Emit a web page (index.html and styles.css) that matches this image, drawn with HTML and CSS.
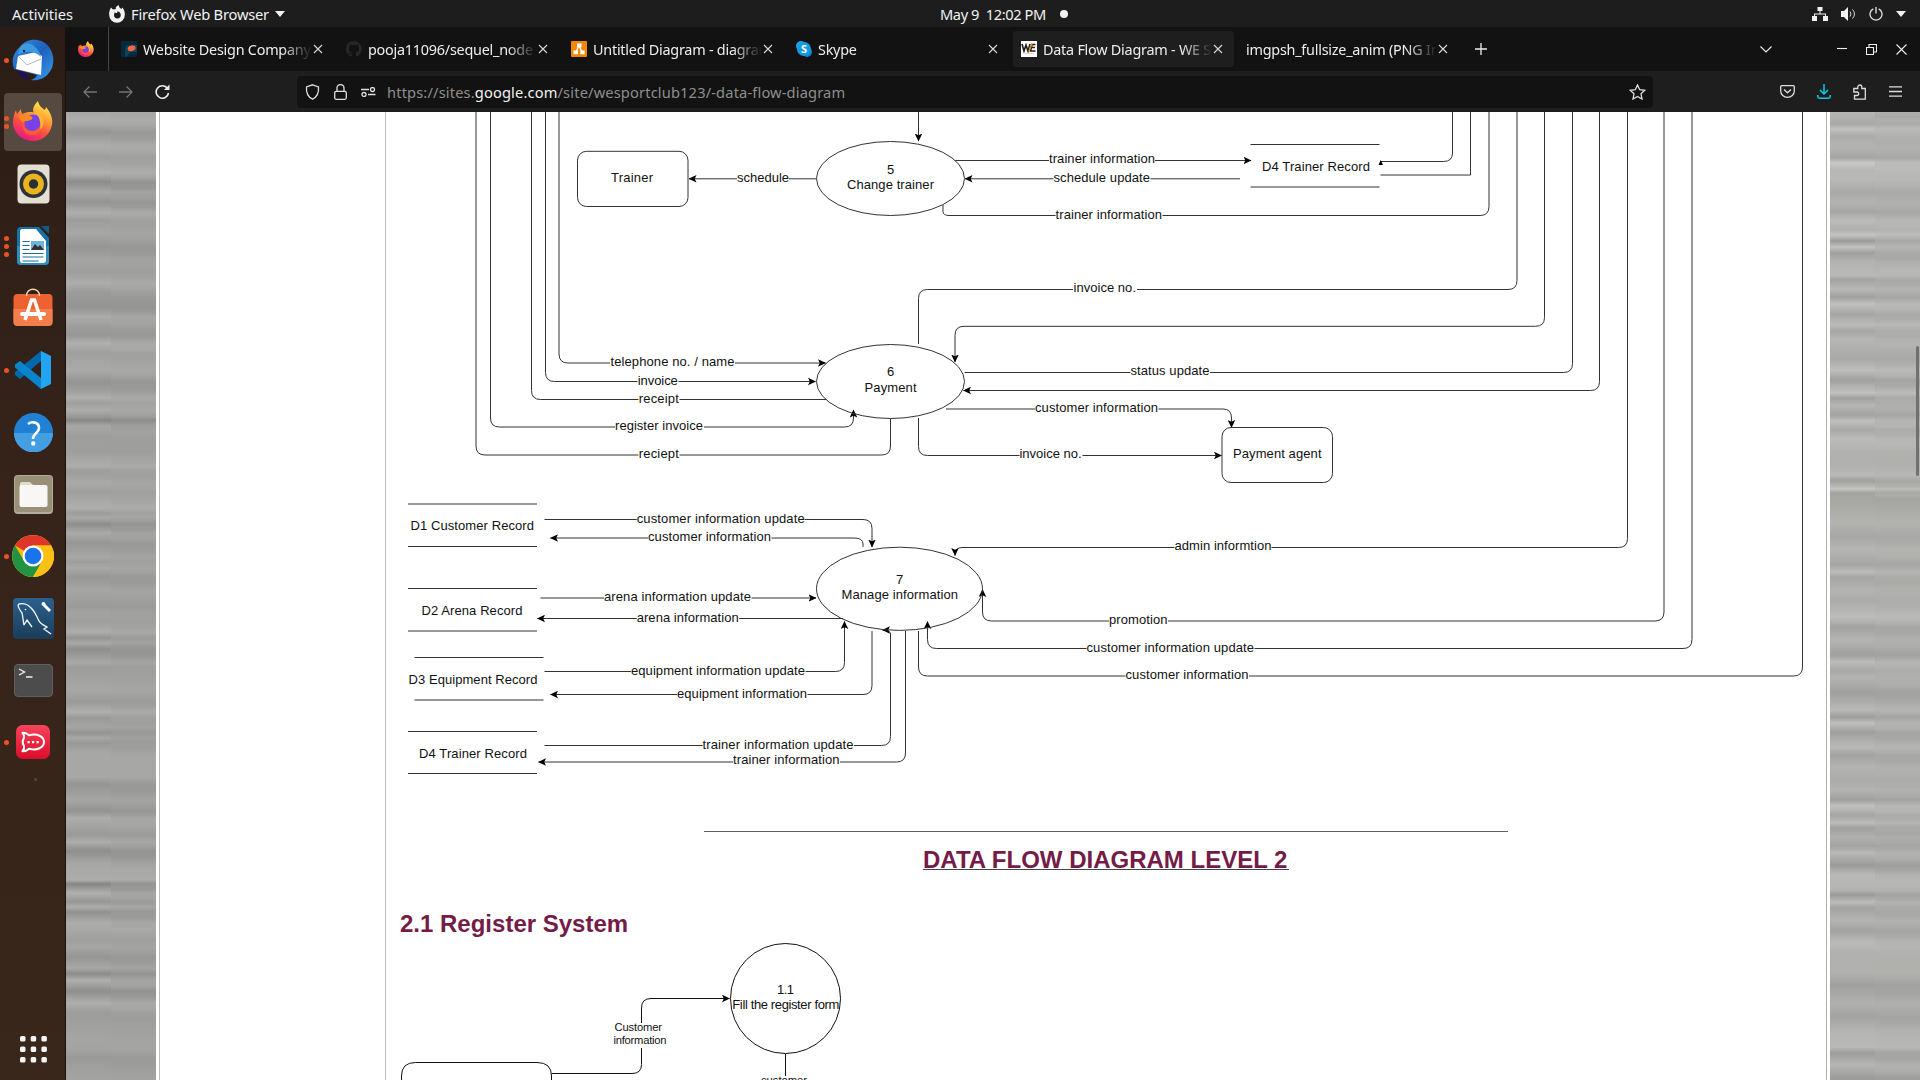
FILE: index.html
```html
<!DOCTYPE html>
<html lang="en">
<head>
<meta charset="utf-8">
<title>Data Flow Diagram</title>
<link rel="stylesheet" href="styles.css">
</head>
<body>
<svg class="defs" width="0" height="0">
  <defs>
    <linearGradient id="foxBody" x1="0.8" y1="0" x2="0.3" y2="1"><stop offset="0" stop-color="#fff44f"/><stop offset=".35" stop-color="#ffa436"/><stop offset=".65" stop-color="#ff4f3f"/><stop offset="1" stop-color="#e31587"/></linearGradient>
    <linearGradient id="birdBody" x1="0" y1="0" x2="1" y2="1"><stop offset="0" stop-color="#2f8fdc"/><stop offset=".5" stop-color="#1f5fc0"/><stop offset="1" stop-color="#3aa0e8"/></linearGradient>
    <linearGradient id="sqlBg" x1="0" y1="0" x2="0" y2="1"><stop offset="0" stop-color="#2b608f"/><stop offset="1" stop-color="#1b3d58"/></linearGradient>
    <linearGradient id="rocketBg" x1="0" y1="0" x2="0" y2="1"><stop offset="0" stop-color="#f5455c"/><stop offset="1" stop-color="#db0c29"/></linearGradient>
    <marker id="arrow" viewBox="0 0 8 8" refX="7.5" refY="4" markerWidth="8" markerHeight="8" markerUnits="userSpaceOnUse" orient="auto"><path d="M0 .2 8 4 0 7.8 1.8 4z"/></marker>
    <symbol id="fox" viewBox="0 0 40 40">
      <path d="M3 9c.4 2 .8 3 1 4l4-5c0 2 .6 4 1.500 5 4-2 8-2.500 11-1.500C19 7 22 3 25 0c1 5 4 7 7 9l1-3c5 6 7 12 6 18-2 10-10 16-19 16C8 40 0 31 0 21c0-4 1-8 3-12z" fill="url(#foxBody)"/>
      <circle cx="20" cy="22" r="8.500" fill="#7542e5"/>
      <path d="M5 15c5-2 10-2 14 1 2 2-2 4-7 4-1 0-1 1-1 2-3-2-5-4-6-7z" fill="#ff8a1f"/>
      <path d="M10 20c0 8 7 12 13 9 3-2 4-4 5-6 1 6-3 11-9 11-7 0-11-7-9-14z" fill="#ff5a3c"/>
      <path d="M23 11c6 2 9 7 7 13-1 3-2 4-3 5 1-6 0-12-4-18z" fill="#ffb52e"/>
    </symbol>
  </defs>
</svg>

<header class="topbar">
  <div class="top-left">
    <span class="t-act">Activities</span>
    <svg class="t-fox" width="16" height="18" viewBox="0 0 16 18"><path d="M.8 5 2 2.500 4 4.500 7 4C6 2 8 1 10 0c-.5 2 1 3 2.500 4l1-1.500C15.500 5 16 8 15.800 10A7.800 7.800 0 0 1 .2 10C.1 8 .2 6.500.8 5zM5 6c2 1 0 2 0 4a3.400 3.400 0 0 0 6.800 0C11.800 8 10 6 8 6.500 9 7.500 8 8 7 8c-1 0-1-1-2-2z" fill="#f2f2f2" fill-rule="evenodd"/></svg>
    <span class="t-app">Firefox Web Browser</span>
    <svg width="10" height="6" viewBox="0 0 10 6"><path d="M0 0h10L5 6z" fill="#f2f2f2"/></svg>
  </div>
  <div class="top-mid"><span class="t-date">May 9&nbsp; 12:02 PM</span><i class="dot"></i></div>
  <div class="top-right">
    <svg width="16" height="14" viewBox="0 0 16 14" fill="#f2f2f2"><path d="M5.500 0h5v4H8.500v2.500H14V9h2v5h-5V9h2V7.500H3V9h2v5H0V9h2V6.500h5.500V4h-2z"/></svg>
    <svg width="15" height="14" viewBox="0 0 15 14"><path d="M0 4h3l4-4v14l-4-4H0z" fill="#f2f2f2"/><path d="M9 4.500q2 2.500 0 5M11.500 2.500q4 4.500 0 9" fill="none" stroke="#ddd"/></svg>
    <svg width="14" height="14" viewBox="0 0 14 14" fill="none" stroke="#e6e6e6" stroke-width="1.300"><path d="M4.300 1.800a6 6 0 1 0 5.400 0M7 0v6.500"/></svg>
    <svg width="10" height="6" viewBox="0 0 10 6"><path d="M0 0h10L5 6z" fill="#f2f2f2"/></svg>
  </div>
</header>

<div class="desktop">
  <nav class="dock">
    <div class="app"><span class="run"><i></i></span>
      <svg width="42" height="42" viewBox="0 0 42 42"><path d="M8 8C15-2 30-1 37 8c6 8 6 20-1 27-4 5-11 7-17 6 3-1 5-3 6-5L2 30C-1 22 1 14 8 8z" fill="url(#birdBody)"/><path d="M5 32c2 5 6 8 13 9-3-3-4-5-4-7z" fill="#20105a"/><path d="M6 17 24 13l6 4-1 19-25-6z" fill="#fff"/><path d="m6 17 9 9 14-6" fill="none" stroke="#b5b8c4"/><path d="M8 8c5-5 12-4 15 0 3 3 5 5 6 10-5-5-13-7-21-3-3 1-1-4 0-7z" fill="#3d9be3"/><circle cx="12" cy="12" r="1.200" fill="#123"/></svg></div>
    <div class="app on"><span class="run"><i></i><i></i></span><svg width="40" height="40"><use href="#fox"/></svg></div>
    <div class="app"><svg width="33" height="40" viewBox="0 0 33 40"><rect x=".5" y=".5" width="32" height="39" rx="4" fill="#e3dfd3"/><circle cx="16.500" cy="20" r="14" fill="#30323a"/><circle cx="16.500" cy="20" r="10.500" fill="#e9b41c"/><circle cx="16.500" cy="20" r="4.700" fill="#2d2f36"/></svg></div>
    <div class="app"><span class="run"><i></i><i></i><i></i></span>
      <svg width="33" height="40" viewBox="0 0 33 40"><path d="M4 1h18l10 11v23a4 4 0 0 1-4 4H4a4 4 0 0 1-4-4V5a4 4 0 0 1 4-4z" fill="#1474a8"/><path d="M0 20h32v15a4 4 0 0 1-4 4H4a4 4 0 0 1-4-4z" fill="#2e8ec0"/><path d="M24 0h8v8z" fill="#0c5c88"/><path d="M5 3h14l10 12v19q0 3-3 3H5q-2 0-2-3V6q0-3 2-3z" fill="#fff"/><path d="M5.500 15.500h7m-7 4h7m-7 4h7m-7 4h21m-21 3.500h21m-21 4h16" stroke="#166f9f" stroke-width="1.200"/><path d="M14 15h13v9H14z" fill="#6fb4da"/><path d="m14 24 4-6 3 3 2-2 4 5z" fill="#333"/></svg></div>
    <div class="app bag"><svg width="40" height="38" viewBox="0 0 40 38"><rect x=".5" y="6" width="39" height="31.500" rx="4" fill="#ed6231"/><path d="M.5 21h39v13a4 4 0 0 1-4 4h-31a4 4 0 0 1-4-4z" fill="#f17e4c"/><path d="M13.500 8C13-1 27-1 26.500 8" fill="none" stroke="#f5d9a4" stroke-width="1.500"/><path d="m12 32 6.500-20h3L28 32" fill="none" stroke="#fff" stroke-width="3.500"/><path d="M9 26h22" stroke="#fff" stroke-width="4" stroke-linecap="round"/></svg></div>
    <div class="app"><span class="run"><i></i></span><svg width="38" height="38" viewBox="0 0 38 38"><path d="M27 0v10L6 28 1 24v-3z" fill="#0069ae"/><path d="M1 13.500 6 10l21 17v11L1 16.500z" fill="#0a84cc"/><path d="m27 0 10 5v28l-10 5z" fill="#22a5f1"/></svg></div>
    <div class="app"><svg width="39" height="39" viewBox="0 0 39 39"><circle cx="19.500" cy="19.500" r="19.500" fill="#2080d4"/><path d="M0 20h39a19.500 19.500 0 0 1-39 0z" fill="#449fe2"/><path d="M14 11c4-3 11-2 11 4 0 5-6 5-6 11" fill="none" stroke="#fff" stroke-width="2.600"/><circle cx="19.300" cy="30.500" r="2.200" fill="#fff"/></svg></div>
    <div class="app"><svg width="39" height="39" viewBox="0 0 39 39"><rect width="39" height="39" rx="4" fill="#b3ad98"/><rect x="1" y="1" width="37" height="36" rx="3" fill="#999078"/><path d="M6 13V9q0-2 2-2h8l3 3z" fill="#e2dcc9"/><rect x="5.500" y="10" width="28" height="22" rx="2" fill="#f8f7f5"/></svg></div>
    <div class="app"><span class="run"><i></i></span><svg width="42" height="42" viewBox="0 0 42 42"><circle cx="21" cy="21" r="21" fill="#fbbc05"/><path d="M21 21 3 10.500A21 21 0 0 1 39.200 10.500H21z" fill="#e0352b"/><path d="M3 10.500A21 21 0 0 0 21 42l9-15.500L21 31 11.500 25z" fill="#229342"/><path d="M21 10.500h18.200A21 21 0 0 1 21 42l9-15.500z" fill="#fcc013"/><circle cx="21" cy="21" r="10.500" fill="#fff"/><circle cx="21" cy="21" r="8.300" fill="#1a73e8"/></svg></div>
    <div class="app"><svg width="41" height="41" viewBox="0 0 41 41"><rect width="41" height="41" rx="4" fill="url(#sqlBg)"/><path d="M11 27c-1-5-1-8-2-12C6 11 4 7 6 6c5-1 8 0 11 3 5 4 6 8 8 12 2 5 5 6 9 8l-3 2 7 5M11 27l3-5 5 7" fill="none" stroke="#eef5fa" stroke-width="1.300"/><circle cx="12.500" cy="11.500" r=".8" fill="#fff"/><path d="m31 7 6 6" stroke="#fff" stroke-width="3"/><circle cx="30.500" cy="6" r="2" fill="#fff"/></svg></div>
    <div class="app"><svg width="39" height="33" viewBox="0 0 39 33"><rect x=".5" y=".5" width="38" height="32" rx="3.500" fill="#4c4c4c" stroke="#606060"/><path d="m5 5 5.500 3L5 11M12 13h6.500" fill="none" stroke="#eee" stroke-width="1.400"/></svg></div>
    <div class="app"><span class="run"><i></i></span><svg width="34" height="34" viewBox="0 0 34 34"><rect width="34" height="34" rx="6.500" fill="url(#rocketBg)"/><path d="M6.500 7.800C9.500 7.600 11.500 8.800 13 10.300 21 8 28 11.500 28 17s-7 9-15 6.700c-1.500 1.500-3.500 2.700-6.500 2.500 1.700-2 2-3.500 1.500-5.200-1.700-2.600-1.700-5.400 0-8 .5-1.700.2-3.200-1.500-5.200z" fill="none" stroke="#fff" stroke-width="2" stroke-linejoin="round"/><path d="M11.500 17.200h2.200m2.300 0h2.200m2.300 0h2.200" stroke="#fff" stroke-width="2.300"/></svg></div>
    <i class="speck"></i>
    <svg class="grid9" width="28" height="28" viewBox="0 0 28 28" fill="#f5f5f5"><rect width="5.500" height="5.500" rx="1.500"/><rect x="10.700" width="5.500" height="5.500" rx="1.500"/><rect x="21.400" width="5.500" height="5.500" rx="1.500"/><rect y="10.500" width="5.500" height="5.500" rx="1.500"/><rect x="10.700" y="10.500" width="5.500" height="5.500" rx="1.500"/><rect x="21.400" y="10.500" width="5.500" height="5.500" rx="1.500"/><rect y="21" width="5.500" height="5.500" rx="1.500"/><rect x="10.700" y="21" width="5.500" height="5.500" rx="1.500"/><rect x="21.400" y="21" width="5.500" height="5.500" rx="1.500"/></svg>
  </nav>

  <main class="browser">
    <div class="tabs">
      <div class="pinned"><svg width="16" height="16"><use href="#fox"/></svg></div>
      <div class="tab"><svg class="fav" viewBox="0 0 16 16"><rect width="16" height="16" rx="1" fill="#04293a"/><path d="M4 16V8q0-4 4-4h8v8q-4-2-8 0-1 4-4 4z" fill="#0d4258"/><ellipse cx="10.500" cy="7.500" rx="4" ry="2.800" fill="#ff6542" transform="rotate(-15 10 7)"/></svg><span class="title">Website Design Company in</span><svg class="x"><path d="m1 1 8 8M9 1 1 9"/></svg></div>
      <div class="tab"><svg class="fav" viewBox="0 0 16 16"><path fill="#24292e" d="M8 0C3.600 0 0 3.600 0 8c0 3.500 2.300 6.500 5.500 7.600.4.100.5-.2.500-.4v-1.500c-2.200.5-2.700-.9-2.700-.9-.4-.9-.9-1.200-.9-1.200-.7-.5.100-.5.100-.5.800.1 1.200.8 1.200.8.700 1.200 1.900.9 2.300.7.100-.5.300-.9.500-1.100-1.800-.2-3.600-.9-3.600-4 0-.9.300-1.600.8-2.100-.1-.2-.4-1 .1-2.100 0 0 .7-.2 2.200.8a7.600 7.600 0 0 1 4 0c1.500-1 2.200-.8 2.200-.8.400 1.100.2 1.900.1 2.100.5.500.8 1.300.8 2.100 0 3.100-1.900 3.700-3.700 3.900.3.300.6.800.6 1.500v2.200c0 .2.100.5.500.4A8 8 0 0 0 8 0z"/></svg><span class="title">pooja11096/sequel_node</span><svg class="x"><path d="m1 1 8 8M9 1 1 9"/></svg></div>
      <div class="tab"><svg class="fav" viewBox="0 0 16 16"><rect width="16" height="16" rx="1" fill="#f08705"/><path d="M8 4.500 5 11m3-6.500L11 11" stroke="#fff" stroke-width="1.300"/><path d="M6 2.500h4.500v3.700H6zM2.500 9.500H7v3.800H2.500zM9.300 9.500h4.400v3.800H9.300z" fill="#fff"/></svg><span class="title">Untitled Diagram - diagrams</span><svg class="x"><path d="m1 1 8 8M9 1 1 9"/></svg></div>
      <div class="tab"><svg class="fav" viewBox="0 0 16 16"><circle cx="5" cy="5" r="5" fill="#19a4ea"/><circle cx="11" cy="11" r="5" fill="#0a84d8"/><circle cx="8" cy="8" r="7" fill="#169be3"/><text x="8" y="12" class="s-letter">S</text></svg><span class="title">Skype</span><svg class="x"><path d="m1 1 8 8M9 1 1 9"/></svg></div>
      <div class="tab active"><svg class="fav" viewBox="0 0 16 16"><rect width="16" height="16" fill="#fff"/><path d="m1 3 2 7 2-6 2 6 2-7M14.500 3.500H11L9.500 10h5M11 6.500h3" fill="none" stroke="#1b1b1b" stroke-width="1.600"/><path d="m11 2.500-3 7.500" stroke="#e98b1c" stroke-width="1.500"/><path d="M4 12.500h9" stroke="#ccc" stroke-width=".7"/></svg><span class="title">Data Flow Diagram - WE SPORT</span><svg class="x"><path d="m1 1 8 8M9 1 1 9"/></svg></div>
      <div class="tab"><span class="title">imgpsh_fullsize_anim (PNG Image)</span><svg class="x"><path d="m1 1 8 8M9 1 1 9"/></svg></div>
      <svg class="plus" width="12" height="12" viewBox="0 0 12 12"><path d="M6 0v12M0 6h12"/></svg>
      <div class="win">
        <svg width="12" height="7" viewBox="0 0 12 7"><path d="m.5.500 5.500 5.500L11.500.500"/></svg>
        <svg class="w-min" width="10" height="10" viewBox="0 0 10 10"><path d="M0 4.500h10"/></svg>
        <svg width="11" height="11" viewBox="0 0 11 11"><path d="M.5 3.500h7v7h-7zM3 3V.500h7.500v7.500H8"/></svg>
        <svg width="11" height="11" viewBox="0 0 11 11"><path d="m.5.500 10 10m0-10-10 10"/></svg>
      </div>
    </div>

    <div class="toolbar">
      <div class="navs">
        <svg class="dim" width="14" height="12" viewBox="0 0 14 12"><path d="M14 6H1m5.500-5.500L1 6l5.500 5.500"/></svg>
        <svg class="dim" width="14" height="12" viewBox="0 0 14 12"><path d="M0 6h13M7.500.5 13 6l-5.500 5.500"/></svg>
        <svg class="reload" width="15" height="15" viewBox="0 0 15 15"><path d="M12.500 4.500A6.200 6.200 0 1 0 13.500 9"/><path d="M14.500.500v5.500H9z" fill="#eee" stroke="none"/></svg>
      </div>
      <div class="url">
        <svg width="15" height="16" viewBox="0 0 15 16"><path d="M7.500.8 13.500 3c.5 6-1.500 10-6 12.200C3 13 1 9 1.500 3z"/></svg>
        <svg width="13" height="16" viewBox="0 0 13 16"><rect x=".7" y="7.300" width="11.600" height="8" rx="1.500"/><path d="M3 7V4a3.500 3.500 0 0 1 7 0v3"/></svg>
        <svg width="15" height="10" viewBox="0 0 15 10"><path d="M0 2.500h8M7 7.500h7.500"/><circle cx="11.500" cy="2.500" r="2"/><circle cx="3" cy="7.500" r="2"/></svg>
        <span class="addr">https://sites.<b>google.com</b>/site/wesportclub123/-data-flow-diagram</span>
        <svg class="star" width="17" height="16" viewBox="0 0 17 16"><path d="m8.500 1 2.200 4.700 5.100.6-3.800 3.500 1 5.200-4.500-2.600L4 15l1-5.200L1.200 6.300l5.100-.6z"/></svg>
      </div>
      <div class="acts">
        <svg width="15" height="13" viewBox="0 0 15 13"><path d="M1.700.7h11.600q1 0 1 1V6a6.800 6.300 0 0 1-13.600 0V1.700q0-1 1-1zM4 4.500l3.500 3.300L11 4.500"/></svg>
        <svg class="dl" width="14" height="15" viewBox="0 0 14 15"><path d="M7 0v9.500M3 6l4 4 4-4M.8 11v1.500q0 1.700 1.700 1.700h9q1.700 0 1.700-1.700V11"/></svg>
        <svg width="14" height="16" viewBox="0 0 14 16"><path d="M.8 8V4.500h4V3a2 2 0 0 1 4 0v1.500h3.500v10.700H1.500V11.500H4a1.700 1.700 0 0 0 0-3.500z"/></svg>
        <svg width="13" height="11" viewBox="0 0 13 11"><path d="M0 .8h13M0 5.500h13M0 10.200h13"/></svg>
      </div>
    </div>

    <div class="view">
      <div class="metal left"></div>
      <div class="page">
        <aside class="side"></aside>
        <article class="content">
          <svg class="dfd" width="1440" height="688" viewBox="386 112 1440 688">
            <g class="wire">
              <path d="M476 112V446q0 9 9 9H881.500q9 0 9-9V418.500"/>
              <path d="M490.500 112V418q0 9 9 9H844.500q9 0 9-9V410" marker-end="url(#arrow)"/>
              <path d="M531.500 112V390.500q0 9 9 9H826"/>
              <path d="M545.500 112V372.500q0 9 9 9H815.500" marker-end="url(#arrow)"/>
              <path d="M559 112V354q0 9 9 9H825.500" marker-end="url(#arrow)"/>
              <path d="M918.500 112V141" marker-end="url(#arrow)"/>
              <path d="M816.500 178.800H689" marker-end="url(#arrow)"/>
              <path d="M954 160.500H1251" marker-end="url(#arrow)"/>
              <path d="M1240 178.800H965" marker-end="url(#arrow)"/>
              <path d="M943 205v6.500q0 4 6 4H1480q9 0 9-9V112"/>
              <path d="M1452.500 112V153q0 8.500-9 8.500H1380.500"/>
              <path d="M1378.500 165 1380.700 160 1383 165z" fill="#000" stroke="none"/>
              <path d="M1470.500 112V175H1380.500"/>
              <path d="M918.500 344V298.500q0-9 9-9H1508q9 0 9-9V112"/>
              <path d="M1544.500 112V317.500q0 8.800-9 8.800H964q-9 0-9 9V362" marker-end="url(#arrow)"/>
              <path d="M1572.500 112V363.500q0 9-9 9H964.500"/>
              <path d="M1599.500 112V381.500q0 9-9 9H963.500" marker-end="url(#arrow)"/>
              <path d="M1627.500 112V538.500q0 9-9 9H962q-7 0-7 8" marker-end="url(#arrow)"/>
              <path d="M1664 112V612q0 9-9 9H991.500q-9 0-9-9V589.500" marker-end="url(#arrow)"/>
              <path d="M1692 112V639.500q0 9-9 9H936.500q-9 0-9-9V621.500" marker-end="url(#arrow)"/>
              <path d="M1802.500 112V667q0 9-9 9H927.500q-9 0-9-9V631"/>
              <path d="M946 409H1223q8.500 0 8.500 9V427.500" marker-end="url(#arrow)"/>
              <path d="M918.500 418V446.500q0 9 9 9H1221.500" marker-end="url(#arrow)"/>
              <path d="M544.500 519.500H863q9 0 9 9V547" marker-end="url(#arrow)"/>
              <path d="M863 547v-3q0-6-9-6H550.500" marker-end="url(#arrow)"/>
              <path d="M540.500 598H816" marker-end="url(#arrow)"/>
              <path d="M843 618.500H537.500" marker-end="url(#arrow)"/>
              <path d="M544.500 671.500H835.500q9 0 9-9V621.500" marker-end="url(#arrow)"/>
              <path d="M872 631V685.500q0 9-9 9H550.500" marker-end="url(#arrow)"/>
              <path d="M544.500 745.500H881.500q9 0 9-9V634q0-4-8-4" marker-end="url(#arrow)"/>
              <path d="M905.500 631V753q0 9-9 9H538.500" marker-end="url(#arrow)"/>
            </g>
            <g class="shape">
              <rect x="577.500" y="151.300" width="110.500" height="55.200" rx="9"/>
              <rect x="1222" y="427.500" width="110.500" height="55" rx="9"/>
              <ellipse cx="890.500" cy="178.500" rx="74" ry="37"/>
              <ellipse cx="890.500" cy="381.500" rx="74" ry="37" fill="none"/>
              <path d="M816.500 588.800a83 41.600 0 0 1 166 0a83 41.600 0 0 1-166 0" fill="none"/>
              <path d="M1250.500 144.500h129M1250.500 187h129M408 504h129M408 546.500h129M408 588.500h129M408 631h129M414.500 657.500h129M414.500 700h129M408 731.500h129M408 773.500h129"/>
            </g>
            <g class="gap">
              <path d="M737 178h52M1049 160h106M1053.500 178h97M1055.500 215h107M1073 289h64M610 362h125M637.500 381h41M638.500 399h41M615 426h89M638.500 454h41M1130.500 372h79.500M1035 408h123.500M1019.500 455h63M636.700 519h168M648 538h123.500M604 597h147.500M636.700 617h102.500M631 671h174.500M677 694h130.500M702.500 745h151.500M733 761h107M1174.500 547h97M1109 620h59M1086.500 648h168M1125.500 675h123.500"/>
            </g>
            <g class="label">
              <text x="611" y="182" textLength="42">Trainer</text>
              <text x="887" y="174">5</text><text x="847" y="189.300" textLength="87">Change trainer</text>
              <text x="887" y="376">6</text><text x="864.500" y="392" textLength="52">Payment</text>
              <text x="896" y="583.500">7</text><text x="841.500" y="599.300" textLength="116.500">Manage information</text>
              <text x="1233" y="458.300" textLength="88.500">Payment agent</text>
              <text x="1262" y="171" textLength="108">D4 Trainer Record</text>
              <text x="410.500" y="530.300" textLength="123.500">D1 Customer Record</text>
              <text x="421.500" y="615" textLength="101">D2 Arena Record</text>
              <text x="408.500" y="684.200" textLength="129">D3 Equipment Record</text>
              <text x="419" y="757.800" textLength="108">D4 Trainer Record</text>
              <text x="737" y="182" textLength="52">schedule</text>
              <text x="1049" y="163.300" textLength="106">trainer information</text>
              <text x="1053.500" y="182" textLength="96.500">schedule update</text>
              <text x="1055.500" y="219" textLength="106.500">trainer information</text>
              <text x="1073.500" y="292.400" textLength="62.500">invoice no.</text>
              <text x="610.500" y="366.300" textLength="124">telephone no. / name</text>
              <text x="637.800" y="384.600" textLength="40">invoice</text>
              <text x="638.800" y="403.300" textLength="40">receipt</text>
              <text x="615" y="429.800" textLength="88">register invoice</text>
              <text x="638.800" y="458.300" textLength="40">reciept</text>
              <text x="1130.500" y="375.300" textLength="79">status update</text>
              <text x="1035" y="412.300" textLength="123">customer information</text>
              <text x="1019.500" y="458.300" textLength="62">invoice no.</text>
              <text x="636.700" y="523" textLength="168">customer information update</text>
              <text x="648" y="541.300" textLength="123">customer information</text>
              <text x="604" y="601.300" textLength="147">arena information update</text>
              <text x="636.700" y="621.500" textLength="102">arena information</text>
              <text x="631" y="674.800" textLength="174">equipment information update</text>
              <text x="677" y="698" textLength="130">equipment information</text>
              <text x="702.500" y="748.600" textLength="151">trainer information update</text>
              <text x="733" y="764.300" textLength="106.500">trainer information</text>
              <text x="1174.500" y="550.300" textLength="97">admin informtion</text>
              <text x="1109" y="624" textLength="58.500">promotion</text>
              <text x="1086.500" y="651.800" textLength="167.500">customer information update</text>
              <text x="1125.500" y="679.300" textLength="123">customer information</text>
            </g>
          </svg>
          <div class="rule"></div>
          <h2>DATA FLOW DIAGRAM LEVEL 2</h2>
          <h3>2.1 Register System</h3>
          <svg class="dfd2" width="1440" height="139" viewBox="386 941 1440 139">
            <g class="wire dark">
              <path d="M551.500 1073.500H632q9.500 0 9.500-9V1048M641.500 1023V1008q0-9.500 9.500-9.500H729.500" marker-end="url(#arrow)"/>
              <path d="M785.500 1054V1076M401.500 1080V1076q0-13.500 14-13.500H537q14.500 0 14.500 13.500V1080"/>
              <circle cx="785.500" cy="998.500" r="55"/>
            </g>
            <g class="label">
              <text x="777" y="993.800" textLength="17">1.1</text>
              <text x="732.300" y="1009.300" textLength="107">Fill the register form</text>
              <g class="small">
                <text x="614.500" y="1031.300" textLength="47.500">Customer</text>
                <text x="613.500" y="1044.300" textLength="53">information</text>
                <text x="761" y="1084" textLength="46">customer</text>
              </g>
            </g>
          </svg>
        </article>
      </div>
      <div class="metal right"><i class="thumb"></i></div>
    </div>
  </main>
</div>
</body>
</html>
```

FILE: styles.css
```css
* { box-sizing: border-box; }
body { margin: 0; width: 1920px; height: 1080px; overflow: hidden; display: flex; flex-direction: column; background: #121212; font-family: "Noto Sans", "Open Sans", sans-serif; font-size: 14.67px; color: #f2f2f2; }
svg { display: block; flex: none; }
.defs { position: absolute; }
span { white-space: nowrap; }

.topbar { height: 27px; flex: none; background: #1d1d1d; display: grid; grid-template-columns: 1fr auto 1fr; align-items: center; }
.top-left { display: flex; align-items: center; padding-left: 12px; }
.t-act { width: 97px; }
.t-fox { margin-right: 6px; }
.t-app { width: 144px; letter-spacing: -.2px; }
.top-mid { display: flex; align-items: center; width: 128px; gap: 15px; margin-left: 88px; }
.t-date { width: 105px; letter-spacing: -.42px; white-space: pre; }
.dot { width: 8px; height: 8px; flex: none; border-radius: 50%; background: #f2f2f2; }
.top-right { display: flex; align-items: center; justify-content: flex-end; gap: 13px; padding-right: 14px; }

.desktop { flex: 1; display: flex; min-height: 0; }
.dock { width: 66px; flex: none; display: flex; flex-direction: column; align-items: center; padding-top: 4px; background: linear-gradient(#2b1d15, #35231a 40%, #3a271b); box-shadow: inset -1px 0 #1a110c; }
.app { width: 58px; height: 58px; margin-bottom: 4px; flex: none; border-radius: 4px; display: flex; align-items: center; justify-content: center; position: relative; }
.app.on { background: #554940; }
.app.on > svg { margin-bottom: 2px; }
.bag > svg { margin-bottom: 3px; }
.run { position: absolute; left: 0; top: 0; height: 58px; width: 5px; display: flex; flex-direction: column; justify-content: center; gap: 3px; }
.run i { width: 5px; height: 5px; border-radius: 50%; background: #e95420; }
.speck { width: 3px; height: 3px; margin: 3px 0 0 5px; background: #454045; }
.grid9 { margin: auto 0 16px 1px; }

.browser { flex: 1; min-width: 0; display: flex; flex-direction: column; }
.tabs { height: 44px; flex: none; background: #121212; display: flex; align-items: center; }
.pinned { width: 43px; height: 44px; padding-left: 12px; border-right: 1px solid #454545; display: flex; align-items: center; }
.pinned + .tab { margin-left: 4px; }
.tab { width: 221px; height: 36px; margin: 0 2px; padding: 0 11px 0 8px; border-radius: 4px; display: flex; align-items: center; flex: none; }
.tab.active { background: #1e1e1e; }
.fav { width: 16px; height: 16px; margin-right: 6px; }
.s-letter { font: bold 11px "Noto Sans", sans-serif; fill: #fff; text-anchor: middle; }
.title { flex: 1; min-width: 0; overflow: hidden; font-size: 14.4px; letter-spacing: -.24px; color: #ededed; -webkit-mask-image: linear-gradient(to right, #000 calc(100% - 30px), transparent); mask-image: linear-gradient(to right, #000 calc(100% - 30px), transparent); }
.x { width: 10px; height: 10px; margin-left: 1px; fill: none; stroke: #d8d8d8; stroke-width: 1.1; }
.plus { margin-left: 14px; fill: none; stroke: #eee; stroke-width: 1.3; }
.win { flex: 1; display: flex; align-items: center; justify-content: flex-end; gap: 19px; padding-right: 13px; fill: none; stroke: #eee; stroke-width: 1.1; }
.w-min { margin-left: 46px; }

.toolbar { height: 41px; flex: none; background: #1e1e1e; display: flex; align-items: center; fill: none; stroke: #dedede; stroke-width: 1.3; }
.navs { width: 231px; display: flex; align-items: center; gap: 22px; padding-left: 17px; }
.dim { stroke: #747474; }
.reload { stroke: #eee; stroke-width: 1.6; }
.url { width: 1356px; height: 32px; border-radius: 4px; background: #121212; display: flex; align-items: center; gap: 14px; padding: 0 8px; }
.url .star { margin-right: -1px; }
.addr { flex: 1; margin-left: -3px; stroke: none; color: #8e8e8e; letter-spacing: .14px; }
.addr b { font-weight: 400; color: #f2f2f2; }
.acts { flex: 1; display: flex; align-items: center; justify-content: flex-end; gap: 22px; padding-right: 18px; }
.dl { stroke: #00ccef; stroke-width: 1.5; }

.view { flex: 1; min-height: 0; display: flex; }
.page { width: 1674px; flex: none; background: #fff; display: flex; padding: 0 3px; }
.side { width: 227px; border-left: 1px solid #bdbdbd; border-right: 1px solid #bdbdbd; }
.content { width: 1441px; border-right: 1px solid #b0b0b0; display: flex; flex-direction: column; font-family: "Liberation Sans", Arial, sans-serif; overflow: hidden; }
.rule { width: 804px; height: 1px; margin: 31px 0 0 318px; background: #5f5f63; flex: none; }
h2, h3 { margin: 0; font-size: 24px; line-height: 28px; font-weight: 700; color: #741b47; flex: none; }
h2 { margin: 14px 0 0 537px; width: 366px; height: 24px; border-bottom: 1px solid #444; white-space: nowrap; }
h3 { margin: 40px 0 0 14px; }
.dfd2 { margin-top: 3px; }

.wire { fill: none; stroke: #333; stroke-width: 1; }
.dark { stroke: #111; }
.shape { fill: #fff; stroke: #333; stroke-width: 1; }
.gap { stroke: #fff; stroke-width: 8; fill: none; }
.label { font-family: "Liberation Sans", Arial, sans-serif; font-size: 13px; fill: #111; }
.small { font-size: 11.2px; }

.metal { position: relative; background-color: #a4a4a2; }
.metal::after { content: ""; position: absolute; top: 0; bottom: 0; left: 45px; right: 0; background-image: inherit; background-position: 0 6px; opacity: .3; }
.left { width: 90px; flex: none; background-image: linear-gradient(rgba(166, 166, 164, .3), rgba(166, 166, 164, .3)), linear-gradient(#a8a8a6 0, #b0b0ae 8px, #a8a8a6 12px, #8e8e8c 20px, #b2b2b0 34px, #9a9a98 45px, #b5b5b3 61px, #828280 70px, #a8a8a6 80px, #8c8c8a 90px, #b2b2b0 101px, #989896 108px, #a8a8a6 121px, #8e8e8c 135px, #a4a4a2 148px, #9a9a98 160px, #b0b0ae 171px, #979795 180px, #8c8c8a 195px, #aeaeac 205px, #989896 215px, #90908e 223px, #b4b4b2 231px, #9c9c9a 241px, #acacaa 258px, #8c8c8a 270px, #9a9a98 278px, #b2b2b0 286px, #9b9b99 291px, #b0b0ae 298px, #8c8c8a 306px, #787876 308px, #a8a8a6 314px, #9a9a98 325px, #9c9c9a 341px, #b0b0ae 354px, #989896 359px, #aaaaa8 371px, #9c9c9a 380px, #b2b2b0 396px, #989896 401px, #aaaaa8 406px, #828280 412px, #acacaa 421px, #90908e 431px, #a8a8a6 445px, #9a9a98 450px, #aaaaa8 456px, #90908e 465px, #a6a6a4 478px, #949492 495px, #a2a2a0 501px, #9a9a98 510px, #b0b0ae 520px, #8c8c8a 526px, #aaaaa8 531px, #848482 537px, #aaaaa8 551px, #989896 555px, #a8a8a6 578px, #949492 590px, #b4b4b2 600px, #949492 606px, #a4a4a2 615px, #8c8c8a 621px, #a8a8a6 626px, #929290 631px, #a8a8a6 641px, #a8a8a6 665px, #8c8c8a 672px, #a6a6a4 688px, #8a8a88 699px, #b0b0ae 706px, #949492 723px, #b0b0ae 730px, #848482 739px, #a6a6a4 751px, #b0b0ae 768px, #787876 772px, #b4b4b2 781px, #90908e 790px, #b0b0ae 795px, #888886 800px, #b0b0ae 811px, #9c9c9a 828px, #a6a6a4 835px, #8e8e8c 845px, #a8a8a6 856px, #80807e 862px, #b4b4b2 868px, #848482 879px, #b2b2b0 891px, #989896 901px, #a4a4a2 928px, #a2a2a0 938px, #949492 945px, #9e9e9c 958px, #a2a2a0 968px); }
.right { width: 90px; flex: none; background-image: linear-gradient(rgba(178, 178, 176, .3), rgba(178, 178, 176, .3)), linear-gradient(#b8b8b6 0, #a4a4a2 12px, #c8c8c6 17px, #a8a8a6 24px, #b4b4b2 35px, #a0a09e 46px, #d2d2d0 51px, #b8b8b6 58px, #bcbcba 67px, #a4a4a2 80px, #b4b4b2 90px, #a0a09e 100px, #c0c0be 108px, #b0b0ae 118px, #ccccca 123px, #929290 129px, #c8c8c6 135px, #989896 141px, #b4b4b2 150px, #bcbcba 163px, #9c9c9a 168px, #bcbcba 177px, #989896 185px, #c8c8c6 192px, #a0a09e 202px, #c0c0be 213px, #a0a09e 219px, #b8b8b6 227px, #a4a4a2 247px, #c4c4c2 258px, #989896 268px, #c8c8c6 281px, #989896 286px, #b8b8b6 293px, #9c9c9a 303px, #c4c4c2 309px, #a4a4a2 318px, #c0c0be 327px, #b0b0ae 340px, #b0b0ae 353px, #bcbcba 363px, #989896 369px, #ccccca 377px, #9c9c98 381px, #a8a8a4 397px, #b4b4b2 410px, #a2a2a0 425px, #b8b8b6 437px, #a0a09e 453px, #c0c0be 460px, #a0a09e 465px, #b4b4b2 478px, #a8a8a6 488px, #c0c0be 505px, #9c9c9a 515px, #b4b4b2 528px, #989896 543px, #c0c0be 550px, #a4a4a2 558px, #b4b4b2 565px, #989896 581px, #bcbcba 598px, #949492 605px, #c4c4c2 611px, #989896 620px, #bcbcba 635px, #9c9c9a 643px, #b4b4b2 655px, #a8a8a6 668px, #b4b4b2 678px, #989896 688px, #c8c8c6 694px, #a0a09e 703px, #c0c0be 711px, #989896 716px, #b0b0ae 725px, #9c9c9a 734px, #bcbcba 741px, #90908e 753px, #bcbcba 763px, #b4b4b2 778px, #90908e 783px, #c0c0be 790px, #9c9c9a 796px, #b4b4b2 808px, #9c9c9a 819px, #bcbcba 830px, #b0b0ae 841px, #b0b0ae 861px, #989896 873px, #b0b0ae 891px, #9c9c9a 905px, #b4b4b2 918px, #bcbcba 935px, #949492 941px, #b8b8b6 953px, #949492 965px, #90908e 968px); }
.thumb { position: absolute; z-index: 1; right: 1px; top: 234px; width: 3px; height: 130px; border-radius: 2px; background: #717171; }
```
